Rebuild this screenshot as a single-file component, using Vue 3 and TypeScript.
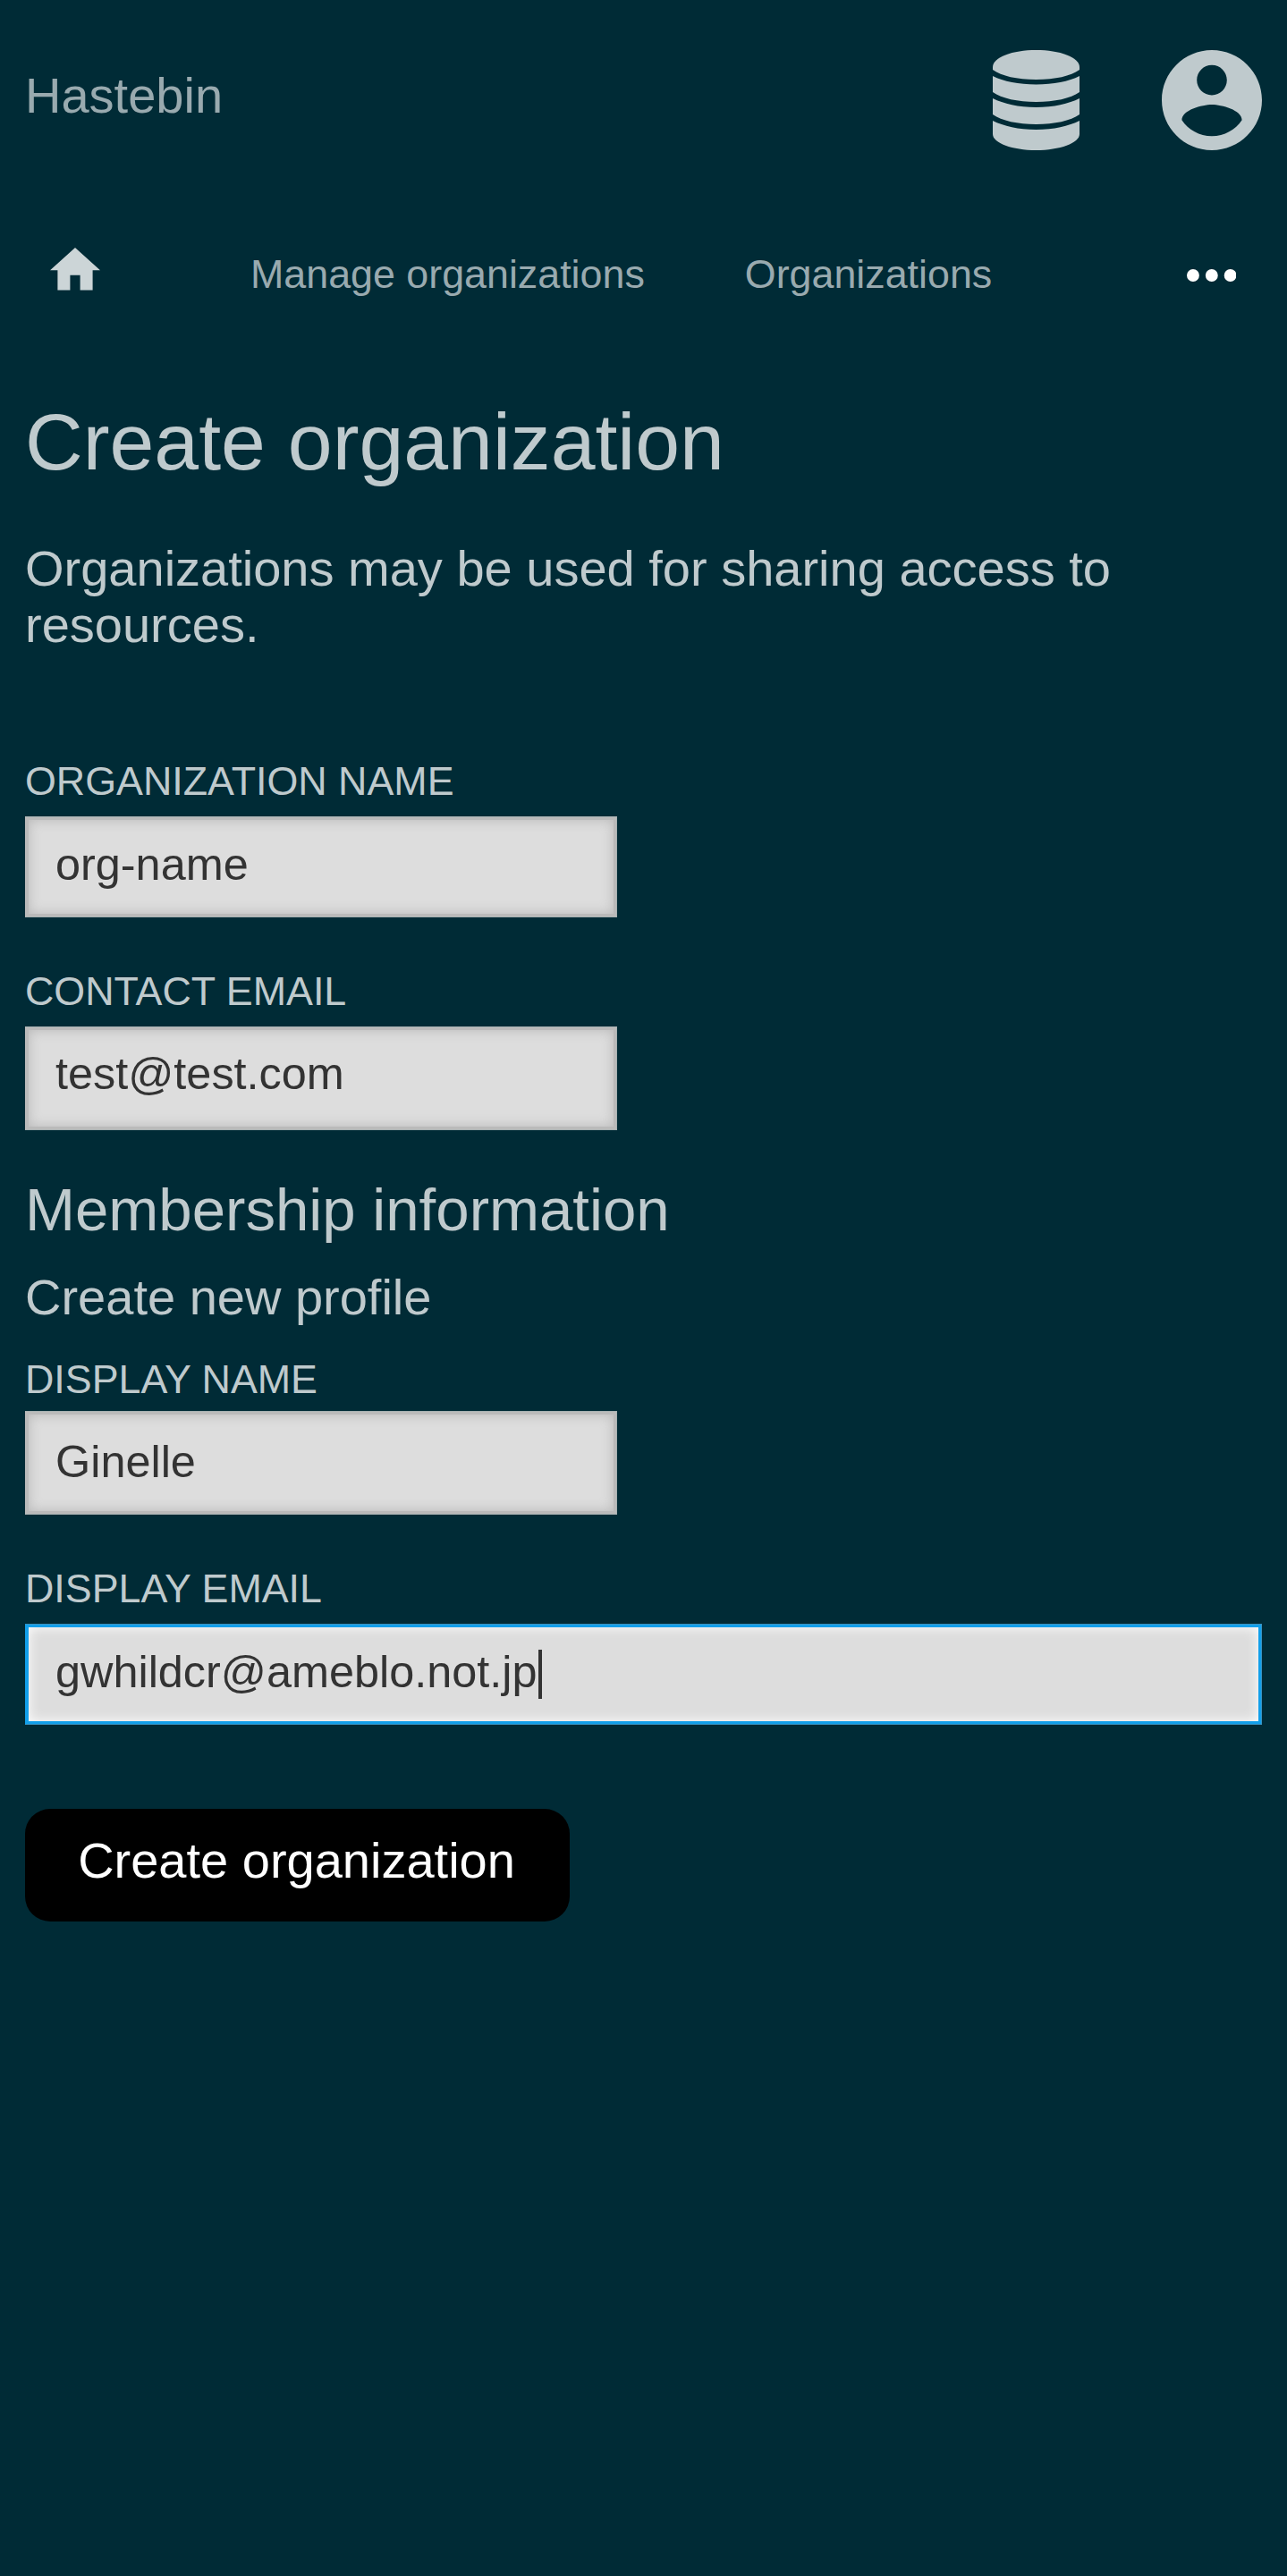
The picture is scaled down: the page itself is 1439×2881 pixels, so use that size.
<script setup lang="ts">
import { ref } from 'vue'

const navLinks: string[] = ['Manage organizations', 'Organizations']
const orgName = ref('org-name')
const contactEmail = ref('test@test.com')
const displayName = ref('Ginelle')
const displayEmail = ref('gwhildcr@ameblo.not.jp')
</script>

<template>
  <div class="page">
    <header class="topbar">
      <a class="brand">Hastebin</a>
      <div class="actions">
        <svg class="db" viewBox="0 0 97 112" fill="currentColor">
          <path d="M48.5 0C75 0 97 8 97 19v3C87 29 70 33 48.5 33S10 29 0 22v-3C0 8 22 0 48.5 0z" />
          <path d="M0 29C12 35 29 38.500 48.500 38.500S85 35 97 29V47C87 54 69 58 48.500 58S10 54 0 47z" />
          <path d="M0 54C12 60 29 64 48.500 64S85 60 97 54V72C87 79 69 83 48.500 83S10 79 0 72z" />
          <path d="M0 79C12 85 29 89 48.500 89S85 85 97 79V94C97 104 75 112 48.500 112S0 104 0 94z" />
        </svg>
        <svg class="account" viewBox="2 2 20 20" fill="currentColor">
          <path d="M12 2C6.480 2 2 6.480 2 12s4.480 10 10 10 10-4.480 10-10S17.520 2 12 2zm0 3c1.660 0 3 1.340 3 3s-1.340 3-3 3-3-1.340-3-3 1.340-3 3-3zm0 14.200c-2.500 0-4.710-1.280-6-3.220.030-1.990 4-3.080 6-3.080 1.990 0 5.970 1.090 6 3.080-1.290 1.940-3.500 3.220-6 3.220z" />
        </svg>
      </div>
    </header>

    <nav class="nav">
      <svg class="home" viewBox="2 3 20 17" fill="currentColor">
        <path d="M10 20v-6h4v6h5v-8h3L12 3 2 12h3v8z" />
      </svg>
      <a v-for="link in navLinks" :key="link" class="link">{{ link }}</a>
      <svg class="more" viewBox="0 0 16 4" fill="currentColor">
        <circle cx="2" cy="2" r="2" />
        <circle cx="8" cy="2" r="2" />
        <circle cx="14" cy="2" r="2" />
      </svg>
    </nav>

    <main class="content">
      <h1>Create organization</h1>
      <p class="intro">Organizations may be used for sharing access to resources.</p>

      <form class="form" @submit.prevent>
        <label class="label org">Organization name</label>
        <input v-model="orgName" class="input org-input" type="text" />

        <label class="label contact">Contact email</label>
        <input v-model="contactEmail" class="input contact-input" type="text" />

        <h2>Membership information</h2>
        <h3>Create new profile</h3>

        <label class="label display">Display name</label>
        <input v-model="displayName" class="input display-input" type="text" />

        <label class="label contact">Display email</label>
        <div class="field">
          <input v-model="displayEmail" class="input active" type="text" />
          <span class="caret"></span>
        </div>

        <button class="submit" type="submit">Create organization</button>
      </form>
    </main>
  </div>
</template>

<style>
html,
body {
  background: #002b36;
}
</style>

<style scoped>
.page {
  box-sizing: border-box;
  width: 1439px;
  height: 2881px;
  padding: 0 28px;
  background: #002b36;
  color: #bfcacd;
  font-family: 'Liberation Sans', Arial, sans-serif;
  font-size: 56px;
  line-height: 63px;
}
.topbar {
  display: flex;
  justify-content: space-between;
  height: 224px;
}
.brand {
  margin-top: 75px;
  color: #99aaaf;
}
.actions {
  display: flex;
  align-items: flex-start;
  padding-top: 56px;
  gap: 92px;
}
.db {
  width: 97px;
  height: 112px;
}
.account {
  width: 112px;
  height: 112px;
}
.nav {
  display: flex;
  align-items: flex-start;
  height: 168px;
  padding: 0 28px;
  font-size: 44.8px;
  line-height: 50px;
  color: #99aaaf;
}
.home {
  width: 56px;
  height: 47.6px;
  margin: 53.3px 168px 0 0;
  color: #ccd5d7;
}
.link {
  margin: 57px 112px 0 0;
}
.more {
  width: 55.6px;
  height: 14px;
  margin: 77px 0.6px 0 auto;
  color: #fff;
}
h1,
h2,
h3,
p {
  margin: 0;
  font-weight: 400;
}
h1 {
  margin-top: 52px;
  font-size: 89.6px;
  line-height: 100px;
}
.intro {
  margin-top: 60px;
}
.form {
  display: flex;
  flex-direction: column;
  align-items: flex-start;
}
.label {
  height: 50px;
  font-size: 44.8px;
  line-height: 50px;
  text-transform: uppercase;
}
.org {
  margin: 118px 0 15px;
}
.contact {
  margin: 57px 0 15px;
}
.display {
  margin: 35px 0 11px;
}
.input {
  display: block;
  box-sizing: border-box;
  width: 662px;
  margin: 0;
  padding: 0 33px;
  border: 1px solid #a9b2b3;
  border-left-color: #bababa;
  border-radius: 0;
  outline: none;
  background: #ddd;
  box-shadow: inset 0 0 0 3px #bababa, inset 0 0 14px 3px #b8b8b8;
  color: #333;
  font-family: inherit;
  font-size: 50.4px;
}
.org-input {
  height: 113px;
  padding-bottom: 6px;
}
.contact-input {
  height: 116px;
  padding-bottom: 11px;
}
.display-input {
  height: 116px;
  padding-bottom: 3px;
}
.field {
  position: relative;
  width: 100%;
}
.active {
  width: 100%;
  height: 113px;
  padding-bottom: 6px;
  border-color: #3a92bf;
  border-left-color: #129fea;
  box-shadow: inset 0 0 0 3px #129fea, inset 0 0 14px 3px #fff;
}
.caret {
  position: absolute;
  left: 574px;
  top: 29px;
  width: 4px;
  height: 55px;
  background: #333;
}
h2 {
  margin-top: 50px;
  font-size: 67.2px;
  line-height: 77px;
}
h3 {
  margin-top: 28px;
  font-size: 56px;
  line-height: 63px;
}
.submit {
  width: 609px;
  height: 126px;
  margin-top: 94px;
  padding: 0 2px 11px 0;
  border: 0;
  border-radius: 28px;
  background: #000;
  color: #fff;
  font-family: inherit;
  font-size: 56px;
  line-height: 63px;
}
</style>
